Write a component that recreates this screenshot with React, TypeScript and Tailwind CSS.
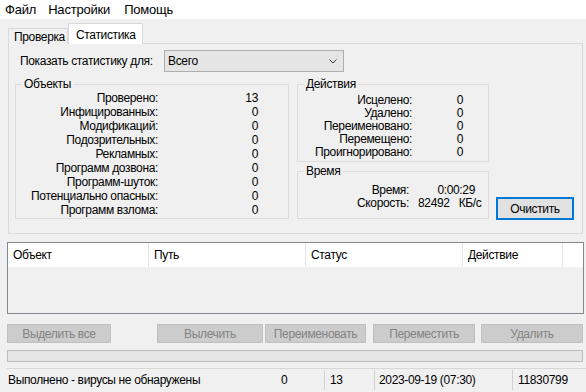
import React from 'react';

const objects: [string, string][] = [
  ['Проверено:', '13'],
  ['Инфицированных:', '0'],
  ['Модификаций:', '0'],
  ['Подозрительных:', '0'],
  ['Рекламных:', '0'],
  ['Программ дозвона:', '0'],
  ['Программ-шуток:', '0'],
  ['Потенциально опасных:', '0'],
  ['Программ взлома:', '0'],
];

const actions: [string, string][] = [
  ['Исцелено:', '0'],
  ['Удалено:', '0'],
  ['Переименовано:', '0'],
  ['Перемещено:', '0'],
  ['Проигнорировано:', '0'],
];

// group box with the caption sitting on the top border
function GroupBox({ title, className, children }: { title: string; className: string; children: React.ReactNode }) {
  return (
    <div className={`relative border border-[#dcdcdc] ${className}`}>
      <span className="absolute -top-[9px] left-[6px] bg-[#f0f0f0] px-[2px] leading-[16px]">{title}</span>
      {children}
    </div>
  );
}

function DisabledButton({ label, className }: { label: string; className: string }) {
  return (
    <div
      className={`flex h-[19px] items-center justify-center border border-[#bfbfbf] bg-[#cccccc] text-[#838383] ${className}`}
    >
      {label}
    </div>
  );
}

export default function App() {
  return (
    <div className="h-[392px] w-[586px] overflow-hidden bg-[#f0f0f0] font-['Liberation_Sans',Arial,sans-serif] text-[12px] tracking-[-0.35px] text-black">
      {/* menu bar */}
      <div className="flex h-[19px] items-center bg-white text-[13px] tracking-[-0.2px]">
        <span className="ml-[5px]">Файл</span>
        <span className="ml-[12px]">Настройки</span>
        <span className="ml-[14px]">Помощь</span>
      </div>

      {/* tabs */}
      <div className="mt-[4px] flex h-[21px] items-end pl-[8px]">
        <div className="flex h-[16px] w-[60px] items-center border border-b-0 border-[#d9d9d9] bg-[#f0f0f0] pl-[5px]">
          Проверка
        </div>
        <div className="relative z-10 flex h-[21px] w-[75px] items-start border border-b-0 border-[#d9d9d9] bg-white pl-[7px] pt-[2px]">
          Статистика
        </div>
      </div>

      <div className="-mt-[1px] ml-[8px] mr-[3px] h-[191px] border border-[#d9d9d9] px-[6px] pt-[6px]">
        <div className="flex h-[22px] items-center">
          <span className="w-[149px] pl-[5px]">Показать статистику для:</span>
          <div className="flex h-[22px] w-[180px] items-center justify-between border border-[#adadad] bg-[#e5e5e5] pl-[3px] pr-[6px]">
            <span>Всего</span>
            <svg width="8" height="5" viewBox="0 0 8 5">
              <polyline points="0.5,0.5 4,4 7.5,0.5" fill="none" stroke="#333" strokeWidth="1" />
            </svg>
          </div>
        </div>

        <div className="mt-[12px] flex">
          <GroupBox title="Объекты" className="h-[135px] w-[274px] pt-[6px]">
            {objects.map(([label, value]) => (
              <div key={label} className="flex h-[14px] items-center">
                <span className="w-[142px] text-right">{label}</span>
                <span className="w-[100px] text-right">{value}</span>
              </div>
            ))}
          </GroupBox>

          <div className="ml-[8px] flex flex-col">
            <GroupBox title="Действия" className="h-[78px] w-[192px] pt-[8px]">
              {actions.map(([label, value]) => (
                <div key={label} className="flex h-[13px] items-center">
                  <span className="w-[114px] text-right">{label}</span>
                  <span className="w-[51px] text-right">{value}</span>
                </div>
              ))}
            </GroupBox>
            <GroupBox title="Время" className="mt-[9px] h-[48px] w-[192px] pt-[11px]">
              <div className="flex h-[13px] items-center">
                <span className="w-[111px] text-right">Время:</span>
                <span className="w-[66px] text-right">0:00:29</span>
              </div>
              <div className="flex h-[13px] items-center">
                <span className="w-[111px] text-right">Скорость:</span>
                <span className="ml-[9px]">82492</span>
                <span className="ml-[9px]">КБ/с</span>
              </div>
            </GroupBox>
          </div>

          <div className="ml-[7px] flex h-[136px] items-end">
            <div className="flex h-[23px] w-[78px] items-center justify-center border-2 border-[#0078d7] bg-[#e1e1e1]">
              Очистить
            </div>
          </div>
        </div>
      </div>

      {/* results list */}
      <div className="ml-[7px] mr-[2px] mt-[8px] h-[72px] border border-[#828790]">
        <div className="flex h-[24px] items-center bg-white">
          <div className="flex h-full w-[141px] items-center border-r border-[#e5e5e5] pl-[5px]">Объект</div>
          <div className="flex h-full w-[157px] items-center border-r border-[#e5e5e5] pl-[5px]">Путь</div>
          <div className="flex h-full w-[157px] items-center border-r border-[#e5e5e5] pl-[5px]">Статус</div>
          <div className="flex h-full w-[100px] items-center border-r border-[#e5e5e5] pl-[5px]">Действие</div>
        </div>
      </div>

      {/* action buttons */}
      <div className="mt-[10px] flex">
        <DisabledButton label="Выделить все" className="ml-[7px] w-[104px]" />
        <DisabledButton label="Вылечить" className="ml-[46px] w-[106px]" />
        <DisabledButton label="Переименовать" className="ml-[2px] w-[101px]" />
        <DisabledButton label="Переместить" className="ml-[7px] w-[102px]" />
        <DisabledButton label="Удалить" className="ml-[6px] w-[102px]" />
      </div>

      {/* progress */}
      <div className="ml-[7px] mr-[3px] mt-[7px] h-[12px] border border-[#bcbcbc] bg-[#e6e6e6]" />

      {/* status bar */}
      <div className="ml-[7px] mt-[6px] h-[1px] bg-[#d7d7d7]" />
      <div className="flex h-[22px] items-center">
        <span className="ml-[8px] w-[273px]">Выполнено - вирусы не обнаружены</span>
        <span className="w-[43px]">0</span>
        <div className="h-[20px] w-px bg-[#d0d0d0]" />
        <span className="w-[49px] pl-[5px]">13</span>
        <div className="h-[20px] w-px bg-[#d0d0d0]" />
        <span className="w-[137px] pl-[4px]">2023-09-19 (07:30)</span>
        <div className="h-[20px] w-px bg-[#d0d0d0]" />
        <span className="pl-[5px]">11830799</span>
      </div>
    </div>
  );
}
